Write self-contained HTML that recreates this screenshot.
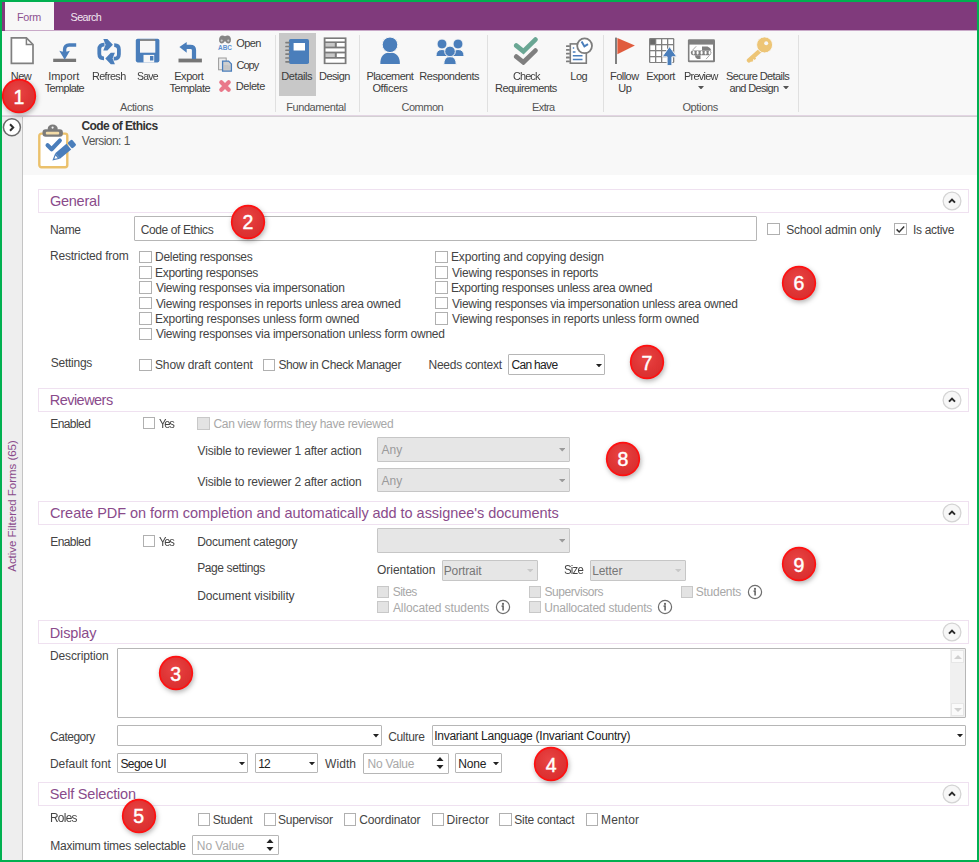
<!DOCTYPE html><html><head><meta charset="utf-8"><style>
html,body{margin:0;padding:0;width:979px;height:862px;overflow:hidden;background:#fff}
body{position:relative;font-family:"Liberation Sans",sans-serif}
.a{position:absolute;display:block}
.t{position:absolute;white-space:nowrap;line-height:1;transform-origin:0 0}
.badge{position:absolute}
.badge svg{position:absolute;left:0;top:0;filter:drop-shadow(1px 2.5px 2.5px rgba(0,0,0,0.3))}
.badge span{position:absolute;left:0;top:0;width:40px;height:40px;line-height:40px;text-align:center;color:#fff;font-size:19.5px;-webkit-text-stroke:0.45px #fff;padding-top:0.6px;box-sizing:border-box}
</style></head><body><div id="wrap" style="position:absolute;left:0;top:0;width:979px;height:862px;overflow:hidden;"><div class="a" style="left:0px;top:0px;width:979px;height:862px;background:#fff"></div><div class="a" style="left:2px;top:2px;width:975px;height:29px;background:#803a7c"></div><div class="a" style="left:5px;top:2px;width:49px;height:29px;background:#f7f7f7"></div><div class="a" style="left:5px;top:30px;width:972px;height:1px;background:#c9a9c8"></div><div class="a" style="left:2px;top:31px;width:975px;height:84px;background:#f8f8f8"></div><div class="a" style="left:2px;top:115px;width:975px;height:1px;background:#e3d5e3"></div><div class="a" style="left:2px;top:116px;width:975px;height:1px;background:#d3d0d3"></div><div class="a" style="left:274.5px;top:35px;width:1.0px;height:77px;background:#e0e0e0"></div><div class="a" style="left:358.5px;top:35px;width:1.0px;height:77px;background:#e0e0e0"></div><div class="a" style="left:487px;top:35px;width:1px;height:77px;background:#e0e0e0"></div><div class="a" style="left:602.5px;top:35px;width:1.0px;height:77px;background:#e0e0e0"></div><div class="a" style="left:798px;top:35px;width:1px;height:77px;background:#e0e0e0"></div><div class="a" style="left:279px;top:32.5px;width:37px;height:63.5px;background:#c8c8c8"></div><svg class="a" style="left:697.6px;top:85.75px" width="6" height="3.5" viewBox="0 0 6 3.5"><path d="M0 0H6L3.0 3.5Z" fill="#555"/></svg><svg class="a" style="left:782.5px;top:85.75px" width="6" height="3.5" viewBox="0 0 6 3.5"><path d="M0 0H6L3.0 3.5Z" fill="#555"/></svg><div class="a" style="left:2px;top:117px;width:20px;height:743px;background:#eeeeee"></div><div class="a" style="left:22px;top:117px;width:1px;height:743px;background:#c4c4c4"></div><div class="a" style="left:23px;top:117px;width:954px;height:57.5px;background:#f8f8f8"></div><div class="a" style="left:13.1px;top:506.2px;width:0;height:0"><div style="position:absolute;left:0;top:0;transform:translate(-50%,-50%) rotate(-90deg);white-space:nowrap;font-size:11.5px;letter-spacing:-0.03px;line-height:1;color:#8a4b8b">Active Filtered Forms (65)</div></div><div class="a" style="left:38px;top:189px;width:931px;height:24px;border:1px solid #efe1f0;box-sizing:border-box;background:#fff"></div><svg class="a" style="left:942.4px;top:190.89999999999998px" width="20" height="20" viewBox="0 0 20 20"><circle cx="10" cy="10" r="8.9" fill="#f7f7f7" stroke="#d4d4d4" stroke-width="1.3"/><path d="M7 11.6L10 8.6L13 11.6" fill="none" stroke="#2a2a2a" stroke-width="2"/></svg><div class="a" style="left:134.4px;top:216.3px;width:622.2px;height:25.19999999999999px;border:1px solid #b6b6b6;box-sizing:border-box;background:#fff;border-radius:1px"></div><div class="a" style="left:767.3px;top:222.5px;width:12.600000000000023px;height:12.599999999999994px;border:1px solid #b0b0b0;box-sizing:border-box;background:#fff"></div><div class="a" style="left:894px;top:222.5px;width:12.600000000000023px;height:12.599999999999994px;border:1px solid #b0b0b0;box-sizing:border-box;background:#fff"></div><svg class="a" style="left:894px;top:222.5px" width="12.6" height="12.6" viewBox="0 0 12.6 12.6"><path d="M2.6 6.4L5.2 9L10.2 3.6" fill="none" stroke="#333" stroke-width="1.5"/></svg><div class="a" style="left:139px;top:250.6px;width:12.599999999999994px;height:12.599999999999994px;border:1px solid #b0b0b0;box-sizing:border-box;background:#fff"></div><div class="a" style="left:139px;top:266.0px;width:12.599999999999994px;height:12.600000000000023px;border:1px solid #b0b0b0;box-sizing:border-box;background:#fff"></div><div class="a" style="left:139px;top:281.4px;width:12.599999999999994px;height:12.600000000000023px;border:1px solid #b0b0b0;box-sizing:border-box;background:#fff"></div><div class="a" style="left:139px;top:296.8px;width:12.599999999999994px;height:12.600000000000023px;border:1px solid #b0b0b0;box-sizing:border-box;background:#fff"></div><div class="a" style="left:139px;top:312.2px;width:12.599999999999994px;height:12.600000000000023px;border:1px solid #b0b0b0;box-sizing:border-box;background:#fff"></div><div class="a" style="left:139px;top:327.6px;width:12.599999999999994px;height:12.600000000000023px;border:1px solid #b0b0b0;box-sizing:border-box;background:#fff"></div><div class="a" style="left:435.1px;top:250.6px;width:12.600000000000023px;height:12.599999999999994px;border:1px solid #b0b0b0;box-sizing:border-box;background:#fff"></div><div class="a" style="left:435.1px;top:266.0px;width:12.600000000000023px;height:12.600000000000023px;border:1px solid #b0b0b0;box-sizing:border-box;background:#fff"></div><div class="a" style="left:435.1px;top:281.4px;width:12.600000000000023px;height:12.600000000000023px;border:1px solid #b0b0b0;box-sizing:border-box;background:#fff"></div><div class="a" style="left:435.1px;top:296.8px;width:12.600000000000023px;height:12.600000000000023px;border:1px solid #b0b0b0;box-sizing:border-box;background:#fff"></div><div class="a" style="left:435.1px;top:312.2px;width:12.600000000000023px;height:12.600000000000023px;border:1px solid #b0b0b0;box-sizing:border-box;background:#fff"></div><div class="a" style="left:139px;top:358.8px;width:12.599999999999994px;height:12.600000000000023px;border:1px solid #b0b0b0;box-sizing:border-box;background:#fff"></div><div class="a" style="left:262.8px;top:358.8px;width:12.600000000000023px;height:12.600000000000023px;border:1px solid #b0b0b0;box-sizing:border-box;background:#fff"></div><div class="a" style="left:508.4px;top:354.3px;width:96.70000000000005px;height:21.19999999999999px;border:1px solid #b6b6b6;box-sizing:border-box;background:#fff;border-radius:1px"></div><svg class="a" style="left:596.1px;top:363.5px" width="6.0" height="3.4" viewBox="0 0 6.0 3.4"><path d="M0 0H6.0L3.0 3.4Z" fill="#222"/></svg><div class="a" style="left:38px;top:388px;width:931px;height:24px;border:1px solid #efe1f0;box-sizing:border-box;background:#fff"></div><svg class="a" style="left:942.4px;top:389.7px" width="20" height="20" viewBox="0 0 20 20"><circle cx="10" cy="10" r="8.9" fill="#f7f7f7" stroke="#d4d4d4" stroke-width="1.3"/><path d="M7 11.6L10 8.6L13 11.6" fill="none" stroke="#2a2a2a" stroke-width="2"/></svg><div class="a" style="left:143.4px;top:417.4px;width:12.0px;height:12.0px;border:1px solid #b0b0b0;box-sizing:border-box;background:#fff"></div><div class="a" style="left:197.4px;top:417.4px;width:12.400000000000006px;height:12.399999999999977px;border:1px solid #c8c8c8;box-sizing:border-box;background:#e3e3e3"></div><div class="a" style="left:377.2px;top:437.3px;width:193.09999999999997px;height:24.5px;border:1px solid #c6c6c6;box-sizing:border-box;background:#e6e6e6;border-radius:1px"></div><svg class="a" style="left:558.9499999999999px;top:448.15000000000003px" width="6.5" height="3.4" viewBox="0 0 6.5 3.4"><path d="M0 0H6.5L3.25 3.4Z" fill="#9a9a9a"/></svg><div class="a" style="left:377.2px;top:468.4px;width:193.09999999999997px;height:24.0px;border:1px solid #c6c6c6;box-sizing:border-box;background:#e6e6e6;border-radius:1px"></div><svg class="a" style="left:558.9499999999999px;top:479.0px" width="6.5" height="3.4" viewBox="0 0 6.5 3.4"><path d="M0 0H6.5L3.25 3.4Z" fill="#9a9a9a"/></svg><div class="a" style="left:38px;top:501px;width:931px;height:24px;border:1px solid #efe1f0;box-sizing:border-box;background:#fff"></div><svg class="a" style="left:942.4px;top:502.8500000000001px" width="20" height="20" viewBox="0 0 20 20"><circle cx="10" cy="10" r="8.9" fill="#f7f7f7" stroke="#d4d4d4" stroke-width="1.3"/><path d="M7 11.6L10 8.6L13 11.6" fill="none" stroke="#2a2a2a" stroke-width="2"/></svg><div class="a" style="left:143.4px;top:535px;width:12.0px;height:12px;border:1px solid #b0b0b0;box-sizing:border-box;background:#fff"></div><div class="a" style="left:377.2px;top:528.4px;width:193.00000000000006px;height:24.5px;border:1px solid #c6c6c6;box-sizing:border-box;background:#e6e6e6;border-radius:1px"></div><svg class="a" style="left:558.85px;top:539.2499999999999px" width="6.5" height="3.4" viewBox="0 0 6.5 3.4"><path d="M0 0H6.5L3.25 3.4Z" fill="#9a9a9a"/></svg><div class="a" style="left:441.5px;top:560.2px;width:96.5px;height:20.59999999999991px;border:1px solid #c6c6c6;box-sizing:border-box;background:#e6e6e6;border-radius:1px"></div><svg class="a" style="left:526.65px;top:569.0999999999999px" width="6.5" height="3.4" viewBox="0 0 6.5 3.4"><path d="M0 0H6.5L3.25 3.4Z" fill="#c8c8c8"/></svg><div class="a" style="left:589.5px;top:560.2px;width:96.5px;height:20.59999999999991px;border:1px solid #c6c6c6;box-sizing:border-box;background:#e6e6e6;border-radius:1px"></div><svg class="a" style="left:674.65px;top:569.0999999999999px" width="6.5" height="3.4" viewBox="0 0 6.5 3.4"><path d="M0 0H6.5L3.25 3.4Z" fill="#c8c8c8"/></svg><div class="a" style="left:377.2px;top:586px;width:12.0px;height:12px;border:1px solid #c8c8c8;box-sizing:border-box;background:#e3e3e3"></div><div class="a" style="left:528.6px;top:586px;width:12.0px;height:12px;border:1px solid #c8c8c8;box-sizing:border-box;background:#e3e3e3"></div><div class="a" style="left:680.5px;top:586px;width:12.0px;height:12px;border:1px solid #c8c8c8;box-sizing:border-box;background:#e3e3e3"></div><svg class="a" style="left:747px;top:583.6px" width="16" height="16" viewBox="0 0 16 16"><circle cx="8" cy="8" r="6.6" fill="none" stroke="#6e6e6e" stroke-width="1.2"/><circle cx="8" cy="4.9" r="1.1" fill="#666"/><path d="M6.6 7.1H8.1V11.6" fill="none" stroke="#666" stroke-width="1.6"/></svg><div class="a" style="left:377.2px;top:601.4px;width:12.0px;height:12.0px;border:1px solid #c8c8c8;box-sizing:border-box;background:#e3e3e3"></div><svg class="a" style="left:495.1px;top:598.8px" width="16" height="16" viewBox="0 0 16 16"><circle cx="8" cy="8" r="6.6" fill="none" stroke="#6e6e6e" stroke-width="1.2"/><circle cx="8" cy="4.9" r="1.1" fill="#666"/><path d="M6.6 7.1H8.1V11.6" fill="none" stroke="#666" stroke-width="1.6"/></svg><div class="a" style="left:528.6px;top:601.4px;width:12.0px;height:12.0px;border:1px solid #c8c8c8;box-sizing:border-box;background:#e3e3e3"></div><svg class="a" style="left:657.4px;top:598.8px" width="16" height="16" viewBox="0 0 16 16"><circle cx="8" cy="8" r="6.6" fill="none" stroke="#6e6e6e" stroke-width="1.2"/><circle cx="8" cy="4.9" r="1.1" fill="#666"/><path d="M6.6 7.1H8.1V11.6" fill="none" stroke="#666" stroke-width="1.6"/></svg><div class="a" style="left:38px;top:620px;width:931px;height:24px;border:1px solid #efe1f0;box-sizing:border-box;background:#fff"></div><svg class="a" style="left:942.4px;top:622.0500000000002px" width="20" height="20" viewBox="0 0 20 20"><circle cx="10" cy="10" r="8.9" fill="#f7f7f7" stroke="#d4d4d4" stroke-width="1.3"/><path d="M7 11.6L10 8.6L13 11.6" fill="none" stroke="#2a2a2a" stroke-width="2"/></svg><div class="a" style="left:117px;top:647.8px;width:848.7px;height:70.60000000000002px;border:1px solid #b6b6b6;box-sizing:border-box;background:#fff;border-radius:1px"></div><div class="a" style="left:949.6px;top:648.8px;width:15.100000000000023px;height:68.60000000000002px;background:#f0f0f0"></div><div class="a" style="left:950.5px;top:649.6px;width:13.5px;height:13.899999999999977px;background:#fafafa;border:1px solid #e6e6e6;box-sizing:border-box"></div><div class="a" style="left:950.5px;top:702.6px;width:13.5px;height:13.899999999999977px;background:#fafafa;border:1px solid #e6e6e6;box-sizing:border-box"></div><svg class="a" style="left:953.5px;top:654.5px" width="8" height="4" viewBox="0 0 8 4"><path d="M0 4L4 0L8 4Z" fill="#d0d0d0"/></svg><svg class="a" style="left:953.5px;top:707.5px" width="8" height="4" viewBox="0 0 8 4"><path d="M0 0L4 4L8 0Z" fill="#d0d0d0"/></svg><div class="a" style="left:117px;top:724.9px;width:264.5px;height:21.300000000000068px;border:1px solid #b6b6b6;box-sizing:border-box;background:#fff;border-radius:1px"></div><svg class="a" style="left:372.5px;top:734.1499999999999px" width="6.0" height="3.4" viewBox="0 0 6.0 3.4"><path d="M0 0H6.0L3.0 3.4Z" fill="#222"/></svg><div class="a" style="left:431.7px;top:724.7px;width:534.0px;height:21.399999999999977px;border:1px solid #b6b6b6;box-sizing:border-box;background:#fff;border-radius:1px"></div><svg class="a" style="left:956.7px;top:734.0px" width="6.0" height="3.4" viewBox="0 0 6.0 3.4"><path d="M0 0H6.0L3.0 3.4Z" fill="#222"/></svg><div class="a" style="left:117px;top:752.6px;width:130.8px;height:20.799999999999955px;border:1px solid #b6b6b6;box-sizing:border-box;background:#fff;border-radius:1px"></div><svg class="a" style="left:238.8px;top:761.5999999999999px" width="6.0" height="3.4" viewBox="0 0 6.0 3.4"><path d="M0 0H6.0L3.0 3.4Z" fill="#222"/></svg><div class="a" style="left:255.1px;top:752.6px;width:62.50000000000003px;height:20.799999999999955px;border:1px solid #b6b6b6;box-sizing:border-box;background:#fff;border-radius:1px"></div><svg class="a" style="left:308.6px;top:761.5999999999999px" width="6.0" height="3.4" viewBox="0 0 6.0 3.4"><path d="M0 0H6.0L3.0 3.4Z" fill="#222"/></svg><div class="a" style="left:362.6px;top:752.8px;width:86.39999999999998px;height:20.800000000000068px;border:1px solid #b6b6b6;box-sizing:border-box;background:#fff;border-radius:1px"></div><svg class="a" style="left:436px;top:756px" width="8" height="14" viewBox="0 0 8 14"><path d="M0.5 5L4 1L7.5 5Z M0.5 9L4 13L7.5 9Z" fill="#222"/></svg><div class="a" style="left:455.3px;top:752.6px;width:46.69999999999999px;height:20.799999999999955px;border:1px solid #b6b6b6;box-sizing:border-box;background:#fff;border-radius:1px"></div><svg class="a" style="left:493.0px;top:761.5999999999999px" width="6.0" height="3.4" viewBox="0 0 6.0 3.4"><path d="M0 0H6.0L3.0 3.4Z" fill="#222"/></svg><div class="a" style="left:38px;top:782px;width:931px;height:24px;border:1px solid #efe1f0;box-sizing:border-box;background:#fff"></div><svg class="a" style="left:942.4px;top:783.9000000000001px" width="20" height="20" viewBox="0 0 20 20"><circle cx="10" cy="10" r="8.9" fill="#f7f7f7" stroke="#d4d4d4" stroke-width="1.3"/><path d="M7 11.6L10 8.6L13 11.6" fill="none" stroke="#2a2a2a" stroke-width="2"/></svg><div class="a" style="left:197.6px;top:813.2px;width:12.400000000000006px;height:12.399999999999977px;border:1px solid #b0b0b0;box-sizing:border-box;background:#fff"></div><div class="a" style="left:263.5px;top:813.2px;width:12.399999999999977px;height:12.399999999999977px;border:1px solid #b0b0b0;box-sizing:border-box;background:#fff"></div><div class="a" style="left:344px;top:813.2px;width:12.399999999999977px;height:12.399999999999977px;border:1px solid #b0b0b0;box-sizing:border-box;background:#fff"></div><div class="a" style="left:431.8px;top:813.2px;width:12.399999999999977px;height:12.399999999999977px;border:1px solid #b0b0b0;box-sizing:border-box;background:#fff"></div><div class="a" style="left:499.2px;top:813.2px;width:12.399999999999977px;height:12.399999999999977px;border:1px solid #b0b0b0;box-sizing:border-box;background:#fff"></div><div class="a" style="left:585.8px;top:813.2px;width:12.399999999999977px;height:12.399999999999977px;border:1px solid #b0b0b0;box-sizing:border-box;background:#fff"></div><div class="a" style="left:192.4px;top:834.8px;width:86.6px;height:19.90000000000009px;border:1px solid #b6b6b6;box-sizing:border-box;background:#fff;border-radius:1px"></div><svg class="a" style="left:266.4px;top:838px" width="8" height="14" viewBox="0 0 8 14"><path d="M0.5 5L4 1L7.5 5Z M0.5 9L4 13L7.5 9Z" fill="#222"/></svg><svg class="a" style="left:10px;top:36px" width="25" height="29" viewBox="0 0 25 29"><path d="M1.4 1.9H16.4L23 8.5V27.3H1.4Z" fill="#fff" stroke="#808080" stroke-width="1.7"/><path d="M16.4 1.9V8.5H23" fill="none" stroke="#808080" stroke-width="1.5"/></svg><svg class="a" style="left:52px;top:42px" width="26" height="22" viewBox="0 0 26 22"><rect x="1.2" y="16.7" width="22.9" height="3.3" fill="#767676"/><path d="M24.2 3H17.2Q12.6 3 12.6 7.6V10.5" fill="none" stroke="#4a7ebb" stroke-width="3.4"/><path d="M7.3 8.8Q12.6 10.6 17.9 8.8L12.7 17.8Z" fill="#4a7ebb"/></svg><svg class="a" style="left:96px;top:38px" width="26" height="28" viewBox="0 0 26 28"><path d="M8.5 6.7H7.8Q3.3 6.7 3.3 11.2V15.8Q3.3 20.3 7.8 20.3H8" fill="none" stroke="#4a7ebb" stroke-width="3.8"/><path d="M7.3 1.1H11.4L16.9 6.85L11.4 12.6H7.3L9.6 6.85Z" fill="#4a7ebb"/><g transform="rotate(180 13.1 13.7)"><path d="M8.5 6.7H7.8Q3.3 6.7 3.3 11.2V15.8Q3.3 20.3 7.8 20.3H8" fill="none" stroke="#4a7ebb" stroke-width="3.8"/><path d="M7.3 1.1H11.4L16.9 6.85L11.4 12.6H7.3L9.6 6.85Z" fill="#4a7ebb"/></g></svg><svg class="a" style="left:135px;top:38px" width="25" height="25" viewBox="0 0 25 25"><rect x="0.8" y="0.8" width="23.6" height="23.6" rx="1.8" fill="#4a7ebb"/><rect x="5" y="1.2" width="15" height="2" fill="#888"/><rect x="5" y="3" width="15.3" height="11.7" fill="#f7f7f7"/><rect x="8.5" y="16.9" width="10.7" height="7.6" fill="#f7f7f7"/><rect x="15" y="18" width="3.4" height="4.5" fill="#4a7ebb"/></svg><svg class="a" style="left:178px;top:41px" width="25" height="22" viewBox="0 0 25 22"><rect x="0.5" y="17.6" width="23.4" height="3.8" fill="#767676"/><path d="M16 18V9Q16 5.8 12.5 5.8H6" fill="none" stroke="#4a7ebb" stroke-width="4.2"/><path d="M1.4 6L8.7 1V11.7Z" fill="#4a7ebb"/></svg><svg class="a" style="left:217px;top:34px" width="16" height="17" viewBox="0 0 16 17"><path d="M2.2 7.5Q1.5 3.5 4 1.8Q6 0.8 8 2.2Q10 0.8 12 1.8Q14.5 3.5 13.8 7.5Q13 9.5 11.3 9.5Q9.3 9.5 8.6 7.5H7.4Q6.7 9.5 4.7 9.5Q3 9.5 2.2 7.5Z" fill="#858585"/><circle cx="4.7" cy="6.6" r="1.1" fill="#c8c8c8"/><circle cx="11.3" cy="6.6" r="1.1" fill="#c8c8c8"/><text x="8" y="15.8" font-size="6.6" font-weight="bold" text-anchor="middle" textLength="14" lengthAdjust="spacingAndGlyphs" fill="#5d90d0" font-family="Liberation Sans">ABC</text></svg><svg class="a" style="left:217px;top:57px" width="16" height="15" viewBox="0 0 16 15"><rect x="1.6" y="1" width="7.6" height="11.8" fill="#ececec" stroke="#9a9a9a" stroke-width="1"/><path d="M5.6 4.1H11.6L14.4 6.9V14.1H5.6Z" fill="#cfcfcf" stroke="#4a7ebb" stroke-width="1.3"/><path d="M8 8V12.6M10 8V12.6M12 8.5V12.6" stroke="#b8b8b8" stroke-width="0.8"/></svg><svg class="a" style="left:218px;top:79px" width="14" height="14" viewBox="0 0 14 14"><path d="M3.3 3.3L10.7 10.7M10.7 3.3L3.3 10.7" stroke="#e9788a" stroke-width="4.2" stroke-linecap="round"/></svg><svg class="a" style="left:285px;top:39px" width="25" height="26" viewBox="0 0 25 26"><rect x="3.9" y="0.1" width="20.1" height="25" rx="1.8" fill="#4a7ebb"/><rect x="8.6" y="4" width="11.4" height="7.5" fill="#fff"/><rect x="0.2" y="2.80" width="4.6" height="1.6" rx="0.6" fill="#7d7d7d"/><rect x="0.2" y="6.65" width="4.6" height="1.6" rx="0.6" fill="#7d7d7d"/><rect x="0.2" y="10.50" width="4.6" height="1.6" rx="0.6" fill="#7d7d7d"/><rect x="0.2" y="14.35" width="4.6" height="1.6" rx="0.6" fill="#7d7d7d"/><rect x="0.2" y="18.20" width="4.6" height="1.6" rx="0.6" fill="#7d7d7d"/><rect x="0.2" y="22.05" width="4.6" height="1.6" rx="0.6" fill="#7d7d7d"/></svg><svg class="a" style="left:323px;top:37px" width="24" height="28" viewBox="0 0 24 28"><rect x="0.7" y="0.4" width="22.8" height="26.7" fill="#7a7a7a"/><rect x="2.5" y="2" width="19.2" height="2.4" fill="#fff"/><rect x="2.5" y="6" width="9.3" height="3.6" fill="#c8c8c8"/><rect x="13.8" y="6" width="7.9" height="3.6" fill="#fff"/><rect x="2.5" y="11.4" width="19.2" height="3.2" fill="#fff"/><rect x="2.5" y="16.4" width="9.3" height="3.6" fill="#c8c8c8"/><rect x="13.8" y="16.4" width="7.9" height="3.6" fill="#fff"/><rect x="2.5" y="21.7" width="19.2" height="4" fill="#fff"/></svg><svg class="a" style="left:379px;top:36px" width="23" height="29" viewBox="0 0 23 29"><path d="M1.3 28.1C1.3 20.5 4.5 16.6 11 16.6C17.5 16.6 20.9 20.5 20.9 28.1Z" fill="#4a7ebb"/><circle cx="11" cy="8.8" r="7.8" fill="#4a7ebb" stroke="#f7f7f7" stroke-width="1"/></svg><svg class="a" style="left:435px;top:38px" width="30" height="28" viewBox="0 0 30 28"><path d="M0.9000000000000004 18.5Q0.9000000000000004 11.5 7 11.5Q13.1 11.5 13.1 18.5Z" fill="#4a7ebb" stroke="#f7f7f7" stroke-width="1"/><circle cx="7" cy="6" r="5" fill="#4a7ebb" stroke="#f7f7f7" stroke-width="1"/><path d="M16.9 18.5Q16.9 11.5 23 11.5Q29.1 11.5 29.1 18.5Z" fill="#4a7ebb" stroke="#f7f7f7" stroke-width="1"/><circle cx="23" cy="6" r="5" fill="#4a7ebb" stroke="#f7f7f7" stroke-width="1"/><path d="M8.75 26.6Q8.75 18.6 15 18.6Q21.25 18.6 21.25 26.6Z" fill="#4a7ebb" stroke="#f7f7f7" stroke-width="1"/><circle cx="15" cy="13.4" r="5.3" fill="#4a7ebb" stroke="#f7f7f7" stroke-width="1"/></svg><svg class="a" style="left:513px;top:36px" width="26" height="29" viewBox="0 0 26 29"><path d="M3.3 20.6L10.4 26.3L22.4 14.6" fill="none" stroke="#7f7f7f" stroke-width="4.7" stroke-linecap="round"/><path d="M3.3 9.6L10.4 15.4L22.4 3.6" fill="none" stroke="#6aa794" stroke-width="4.7" stroke-linecap="round"/></svg><svg class="a" style="left:565px;top:36px" width="29" height="29" viewBox="0 0 29 29"><rect x="5.3" y="7.9" width="16" height="19.3" fill="#fff" stroke="#7d7d7d" stroke-width="1.6"/><path d="M7.8 12.1H9.2M7.8 15.9H10.5M7.8 19.7H17.5M7.8 23.5H17.5" stroke="#4a7ebb" stroke-width="1.5"/><rect x="1" y="9.2" width="3.9" height="1.8" rx="0.5" fill="#7d7d7d"/><rect x="1" y="13.0" width="3.9" height="1.8" rx="0.5" fill="#7d7d7d"/><rect x="1" y="16.8" width="3.9" height="1.8" rx="0.5" fill="#7d7d7d"/><rect x="1" y="20.6" width="3.9" height="1.8" rx="0.5" fill="#7d7d7d"/><rect x="1" y="24.4" width="3.9" height="1.8" rx="0.5" fill="#7d7d7d"/><circle cx="19.6" cy="9.8" r="7.4" fill="#fff" stroke="#7d7d7d" stroke-width="1.8"/><path d="M16.6 5.6L19.4 10.4L23 8.1" fill="none" stroke="#4a7ebb" stroke-width="2"/></svg><svg class="a" style="left:614px;top:37px" width="22" height="28" viewBox="0 0 22 28"><rect x="1" y="0.6" width="2" height="26.4" fill="#808080"/><path d="M3.4 0.9L20.9 8.6L3.4 17.2Z" fill="#e05c3e"/></svg><svg class="a" style="left:648px;top:37px" width="30" height="29" viewBox="0 0 30 29"><rect x="1" y="1" width="25.3" height="25" rx="1.2" fill="#808080"/><rect x="2.3" y="2.3" width="4.7" height="4.7" fill="#6a6a6a"/><rect x="8.3" y="2.3" width="4.7" height="4.7" fill="#fff"/><rect x="14.3" y="2.3" width="4.7" height="4.7" fill="#fff"/><rect x="20.3" y="2.3" width="4.7" height="4.7" fill="#fff"/><rect x="2.3" y="8.3" width="4.7" height="4.7" fill="#fff"/><rect x="8.3" y="8.3" width="4.7" height="4.7" fill="#fff"/><rect x="14.3" y="8.3" width="4.7" height="4.7" fill="#fff"/><rect x="20.3" y="8.3" width="4.7" height="4.7" fill="#fff"/><rect x="2.3" y="14.3" width="4.7" height="4.7" fill="#fff"/><rect x="8.3" y="14.3" width="4.7" height="4.7" fill="#fff"/><rect x="14.3" y="14.3" width="4.7" height="4.7" fill="#fff"/><rect x="20.3" y="14.3" width="4.7" height="4.7" fill="#fff"/><rect x="2.3" y="20.3" width="4.7" height="4.7" fill="#fff"/><rect x="8.3" y="20.3" width="4.7" height="4.7" fill="#fff"/><rect x="14.3" y="20.3" width="4.7" height="4.7" fill="#fff"/><rect x="20.3" y="20.3" width="4.7" height="4.7" fill="#fff"/><path d="M21.5 9.6L28.8 19.8H23.9V28.6H19.1V19.8H14.2Z" fill="#4a7ebb" stroke="#f7f7f7" stroke-width="1"/></svg><svg class="a" style="left:687px;top:39px" width="29" height="24" viewBox="0 0 29 24"><rect x="0.9" y="0.3" width="27.1" height="22.9" rx="1.3" fill="#808080"/><rect x="2.5" y="5.6" width="23.5" height="15.8" fill="#fff"/><path d="M3.8 13.8Q3.8 11.4 6 11.4H22.2Q24.4 11.4 24.4 13.8Q24.4 16.2 22.2 16.2H6Q3.8 16.2 3.8 13.8Z" fill="#808080"/><rect x="5.6" y="12.1" width="2" height="3.3" rx="0.8" fill="#fff"/><rect x="9.6" y="12.1" width="2" height="3.3" rx="0.8" fill="#fff"/><rect x="13.6" y="12.1" width="2" height="3.3" rx="0.8" fill="#fff"/><rect x="17.6" y="12.1" width="2" height="3.3" rx="0.8" fill="#fff"/><rect x="21.6" y="12.1" width="2" height="3.3" rx="0.8" fill="#fff"/><path d="M15 7.6H20.5Q23.5 8.5 24.4 11.4H15Z" fill="#808080"/><path d="M7.7 16.2H13.5V20.1H10.5Q8.3 19 7.7 16.2Z" fill="#808080"/><path d="M5.5 11.2L9.2 7.3M19 20.1L22.7 16.2" stroke="#a8a8a8" stroke-width="1"/></svg><svg class="a" style="left:745px;top:35px" width="30" height="28" viewBox="0 0 30 28"><path d="M15.6 15.2L4 25.4" stroke="#edc576" stroke-width="4.4" stroke-linecap="round"/><path d="M8.6 22.5L10.4 24.3M6 24.8L7.6 26.4" stroke="#edc576" stroke-width="2"/><circle cx="19.6" cy="9.9" r="8" fill="#edc576" stroke="#f7f7f7" stroke-width="0.9"/><circle cx="21.2" cy="8.2" r="2" fill="#f7f7f7"/></svg><svg class="a" style="left:36px;top:122px" width="40" height="48" viewBox="0 0 40 48"><rect x="3.3" y="11.6" width="28" height="33.6" rx="2.2" fill="#fff" stroke="#ebc16c" stroke-width="2.4"/><rect x="6.5" y="7.2" width="20.4" height="7.6" rx="3.2" fill="#7b7b7b"/><ellipse cx="16.7" cy="6.8" rx="5" ry="4.2" fill="#7b7b7b"/><circle cx="16.6" cy="5.6" r="1.1" fill="#f4f4f4"/><rect x="9.8" y="9.8" width="13.4" height="2.6" rx="1" fill="#f3dca8"/><path d="M11.6 23.3L15.6 27.2L23.8 18.6" fill="none" stroke="#4a7ebb" stroke-width="4.2" stroke-linejoin="round" stroke-linecap="round"/><g transform="translate(16.4 38.4) rotate(-40)"><path d="M0 0L6.8 -3.7V3.7Z" fill="#4a7ebb"/><path d="M2.6 0L5.6 -1.8V1.8Z" fill="#fff"/><rect x="6.8" y="-3.7" width="14.6" height="7.4" fill="#4a7ebb"/><rect x="22.6" y="-3.7" width="5.8" height="7.4" rx="1.6" fill="#4a7ebb"/></g></svg><svg class="a" style="left:2px;top:117px" width="20" height="21" viewBox="0 0 20 21"><circle cx="9.9" cy="10.3" r="8.5" fill="#fff" stroke="#6a6a6a" stroke-width="1.5"/><path d="M8 7.3L11.2 10.5L8 13.7" fill="none" stroke="#2e2e2e" stroke-width="2"/></svg><div class="t" style="left:17.04px;top:11.55px;font-size:10.80px;letter-spacing:-0.333px;color:#8d5290;font-weight:normal">Form</div><div class="t" style="left:70.57px;top:11.55px;font-size:10.80px;letter-spacing:-0.597px;color:#f0e6f0;font-weight:normal">Search</div><div class="t" style="left:10.81px;top:70.65px;font-size:11.00px;letter-spacing:-0.613px;color:#3c3c3c;font-weight:normal">New</div><div class="t" style="left:48.23px;top:70.65px;font-size:11.00px;letter-spacing:-0.036px;color:#3c3c3c;font-weight:normal">Import</div><div class="t" style="left:44.69px;top:82.54px;font-size:11.00px;letter-spacing:-0.665px;color:#3c3c3c;font-weight:normal">Template</div><div class="t" style="left:91.81px;top:70.65px;font-size:11.00px;letter-spacing:-0.640px;color:#3c3c3c;font-weight:normal;transform:scaleX(0.9862)">Refresh</div><div class="t" style="left:136.82px;top:70.65px;font-size:11.00px;letter-spacing:-0.816px;color:#3c3c3c;font-weight:normal;transform:scaleX(0.9511)">Save</div><div class="t" style="left:174.23px;top:70.65px;font-size:11.00px;letter-spacing:-0.441px;color:#3c3c3c;font-weight:normal">Export</div><div class="t" style="left:169.52px;top:82.54px;font-size:11.00px;letter-spacing:-0.499px;color:#3c3c3c;font-weight:normal">Template</div><div class="t" style="left:236.31px;top:38.34px;font-size:11.00px;letter-spacing:-0.629px;color:#3c3c3c;font-weight:normal">Open</div><div class="t" style="left:236.47px;top:60.04px;font-size:11.00px;letter-spacing:-0.982px;color:#3c3c3c;font-weight:normal">Copy</div><div class="t" style="left:235.81px;top:80.84px;font-size:11.00px;letter-spacing:-0.454px;color:#3c3c3c;font-weight:normal">Delete</div><div class="t" style="left:119.99px;top:102.25px;font-size:11.00px;letter-spacing:-0.419px;color:#555;font-weight:normal">Actions</div><div class="t" style="left:281.23px;top:70.65px;font-size:11.00px;letter-spacing:-0.370px;color:#3c3c3c;font-weight:normal">Details</div><div class="t" style="left:319.09px;top:70.65px;font-size:11.00px;letter-spacing:-0.600px;color:#3c3c3c;font-weight:normal">Design</div><div class="t" style="left:286.23px;top:102.25px;font-size:11.00px;letter-spacing:-0.425px;color:#555;font-weight:normal">Fundamental</div><div class="t" style="left:366.51px;top:70.65px;font-size:11.00px;letter-spacing:-0.583px;color:#3c3c3c;font-weight:normal">Placement</div><div class="t" style="left:372.40px;top:82.54px;font-size:11.00px;letter-spacing:-0.332px;color:#3c3c3c;font-weight:normal">Officers</div><div class="t" style="left:419.23px;top:70.65px;font-size:11.00px;letter-spacing:-0.443px;color:#3c3c3c;font-weight:normal">Respondents</div><div class="t" style="left:401.49px;top:102.25px;font-size:11.00px;letter-spacing:-0.486px;color:#555;font-weight:normal">Common</div><div class="t" style="left:512.71px;top:70.65px;font-size:11.00px;letter-spacing:-0.910px;color:#3c3c3c;font-weight:normal;transform:scaleX(0.9940)">Check</div><div class="t" style="left:495.01px;top:82.54px;font-size:11.00px;letter-spacing:-0.562px;color:#3c3c3c;font-weight:normal">Requirements</div><div class="t" style="left:570.30px;top:70.65px;font-size:11.00px;letter-spacing:-0.463px;color:#3c3c3c;font-weight:normal">Log</div><div class="t" style="left:532.11px;top:102.25px;font-size:11.00px;letter-spacing:-0.659px;color:#555;font-weight:normal">Extra</div><div class="t" style="left:610.03px;top:70.65px;font-size:11.00px;letter-spacing:-0.542px;color:#3c3c3c;font-weight:normal">Follow</div><div class="t" style="left:618.17px;top:82.54px;font-size:11.00px;letter-spacing:-0.457px;color:#3c3c3c;font-weight:normal">Up</div><div class="t" style="left:646.23px;top:70.65px;font-size:11.00px;letter-spacing:-0.531px;color:#3c3c3c;font-weight:normal">Export</div><div class="t" style="left:683.77px;top:70.65px;font-size:11.00px;letter-spacing:-0.744px;color:#3c3c3c;font-weight:normal;transform:scaleX(0.9941)">Preview</div><div class="t" style="left:726.08px;top:70.65px;font-size:11.00px;letter-spacing:-0.603px;color:#3c3c3c;font-weight:normal">Secure Details</div><div class="t" style="left:729.46px;top:82.54px;font-size:11.00px;letter-spacing:-0.663px;color:#3c3c3c;font-weight:normal">and Design</div><div class="t" style="left:682.39px;top:102.25px;font-size:11.00px;letter-spacing:-0.340px;color:#555;font-weight:normal">Options</div><div class="t" style="left:81.44px;top:119.74px;font-size:12.00px;letter-spacing:-0.564px;color:#333;font-weight:bold">Code of Ethics</div><div class="t" style="left:81.87px;top:134.64px;font-size:12.00px;letter-spacing:-0.542px;color:#555;font-weight:normal">Version: 1</div><div class="t" style="left:49.92px;top:194.38px;font-size:14.50px;letter-spacing:-0.231px;color:#8a4b8b;font-weight:normal">General</div><div class="t" style="left:49.96px;top:223.84px;font-size:12.00px;letter-spacing:-0.306px;color:#444;font-weight:normal">Name</div><div class="t" style="left:140.67px;top:223.84px;font-size:12.00px;letter-spacing:-0.387px;color:#444;font-weight:normal">Code of Ethics</div><div class="t" style="left:786.20px;top:223.94px;font-size:12.00px;letter-spacing:-0.210px;color:#444;font-weight:normal">School admin only</div><div class="t" style="left:912.98px;top:223.94px;font-size:12.00px;letter-spacing:-0.329px;color:#444;font-weight:normal">Is active</div><div class="t" style="left:49.96px;top:249.94px;font-size:12.00px;letter-spacing:-0.190px;color:#444;font-weight:normal">Restricted from</div><div class="t" style="left:155.09px;top:251.34px;font-size:12.00px;letter-spacing:-0.298px;color:#444;font-weight:normal">Deleting responses</div><div class="t" style="left:155.09px;top:266.74px;font-size:12.00px;letter-spacing:-0.342px;color:#444;font-weight:normal">Exporting responses</div><div class="t" style="left:155.88px;top:282.14px;font-size:12.00px;letter-spacing:-0.259px;color:#444;font-weight:normal">Viewing responses via impersonation</div><div class="t" style="left:155.88px;top:297.54px;font-size:12.00px;letter-spacing:-0.289px;color:#444;font-weight:normal">Viewing responses in reports unless area owned</div><div class="t" style="left:155.09px;top:312.94px;font-size:12.00px;letter-spacing:-0.250px;color:#444;font-weight:normal">Exporting responses unless form owned</div><div class="t" style="left:155.88px;top:328.34px;font-size:12.00px;letter-spacing:-0.248px;color:#444;font-weight:normal">Viewing responses via impersonation unless form owned</div><div class="t" style="left:450.96px;top:251.34px;font-size:12.00px;letter-spacing:-0.165px;color:#444;font-weight:normal">Exporting and copying design</div><div class="t" style="left:452.10px;top:266.74px;font-size:12.00px;letter-spacing:-0.281px;color:#444;font-weight:normal">Viewing responses in reports</div><div class="t" style="left:450.96px;top:282.14px;font-size:12.00px;letter-spacing:-0.333px;color:#444;font-weight:normal">Exporting responses unless area owned</div><div class="t" style="left:452.10px;top:297.54px;font-size:12.00px;letter-spacing:-0.311px;color:#444;font-weight:normal">Viewing responses via impersonation unless area owned</div><div class="t" style="left:452.10px;top:312.94px;font-size:12.00px;letter-spacing:-0.242px;color:#444;font-weight:normal">Viewing responses in reports unless form owned</div><div class="t" style="left:50.72px;top:357.44px;font-size:12.00px;letter-spacing:-0.246px;color:#444;font-weight:normal">Settings</div><div class="t" style="left:155.01px;top:359.44px;font-size:12.00px;letter-spacing:-0.136px;color:#444;font-weight:normal">Show draft content</div><div class="t" style="left:278.44px;top:359.44px;font-size:12.00px;letter-spacing:-0.389px;color:#444;font-weight:normal">Show in Check Manager</div><div class="t" style="left:428.57px;top:359.44px;font-size:12.00px;letter-spacing:-0.271px;color:#444;font-weight:normal">Needs context</div><div class="t" style="left:511.38px;top:359.34px;font-size:12.00px;letter-spacing:-0.666px;color:#222;font-weight:normal">Can have</div><div class="t" style="left:49.77px;top:393.18px;font-size:14.50px;letter-spacing:-0.539px;color:#8a4b8b;font-weight:normal">Reviewers</div><div class="t" style="left:50.25px;top:418.14px;font-size:12.00px;letter-spacing:-0.581px;color:#444;font-weight:normal">Enabled</div><div class="t" style="left:159.36px;top:418.14px;font-size:12.00px;letter-spacing:-1.244px;color:#444;font-weight:normal;transform:scaleX(0.9305)">Yes</div><div class="t" style="left:213.41px;top:418.14px;font-size:12.00px;letter-spacing:-0.286px;color:#a8a8a8;font-weight:normal">Can view forms they have reviewed</div><div class="t" style="left:197.57px;top:445.14px;font-size:12.00px;letter-spacing:-0.175px;color:#444;font-weight:normal">Visible to reviewer 1 after action</div><div class="t" style="left:381.48px;top:443.99px;font-size:12.00px;letter-spacing:0.008px;color:#9a9a9a;font-weight:normal">Any</div><div class="t" style="left:197.57px;top:475.74px;font-size:12.00px;letter-spacing:-0.175px;color:#444;font-weight:normal">Visible to reviewer 2 after action</div><div class="t" style="left:381.48px;top:474.84px;font-size:12.00px;letter-spacing:0.008px;color:#9a9a9a;font-weight:normal">Any</div><div class="t" style="left:49.92px;top:506.33px;font-size:14.50px;letter-spacing:-0.044px;color:#8a4b8b;font-weight:normal">Create PDF on form completion and automatically add to assignee&#x27;s documents</div><div class="t" style="left:50.25px;top:535.94px;font-size:12.00px;letter-spacing:-0.581px;color:#444;font-weight:normal">Enabled</div><div class="t" style="left:159.36px;top:535.94px;font-size:12.00px;letter-spacing:-1.244px;color:#444;font-weight:normal;transform:scaleX(0.9305)">Yes</div><div class="t" style="left:197.13px;top:536.24px;font-size:12.00px;letter-spacing:-0.222px;color:#444;font-weight:normal">Document category</div><div class="t" style="left:197.13px;top:562.44px;font-size:12.00px;letter-spacing:-0.373px;color:#444;font-weight:normal">Page settings</div><div class="t" style="left:377.05px;top:564.44px;font-size:12.00px;letter-spacing:-0.039px;color:#444;font-weight:normal">Orientation</div><div class="t" style="left:443.76px;top:564.94px;font-size:12.00px;letter-spacing:-0.133px;color:#777;font-weight:normal">Portrait</div><div class="t" style="left:563.64px;top:564.44px;font-size:12.00px;letter-spacing:-0.853px;color:#444;font-weight:normal;transform:scaleX(0.9483)">Size</div><div class="t" style="left:592.16px;top:564.94px;font-size:12.00px;letter-spacing:-0.078px;color:#777;font-weight:normal">Letter</div><div class="t" style="left:197.13px;top:590.34px;font-size:12.00px;letter-spacing:-0.104px;color:#444;font-weight:normal">Document visibility</div><div class="t" style="left:392.72px;top:586.44px;font-size:12.00px;letter-spacing:-0.511px;color:#a8a8a8;font-weight:normal">Sites</div><div class="t" style="left:544.41px;top:586.44px;font-size:12.00px;letter-spacing:-0.421px;color:#a8a8a8;font-weight:normal">Supervisors</div><div class="t" style="left:695.75px;top:586.44px;font-size:12.00px;letter-spacing:-0.252px;color:#a8a8a8;font-weight:normal">Students</div><div class="t" style="left:392.94px;top:601.84px;font-size:12.00px;letter-spacing:-0.103px;color:#a8a8a8;font-weight:normal">Allocated students</div><div class="t" style="left:544.36px;top:601.84px;font-size:12.00px;letter-spacing:-0.220px;color:#a8a8a8;font-weight:normal">Unallocated students</div><div class="t" style="left:49.77px;top:625.53px;font-size:14.50px;letter-spacing:-0.132px;color:#8a4b8b;font-weight:normal">Display</div><div class="t" style="left:49.96px;top:650.44px;font-size:12.00px;letter-spacing:-0.124px;color:#444;font-weight:normal">Description</div><div class="t" style="left:50.08px;top:731.44px;font-size:12.00px;letter-spacing:-0.506px;color:#444;font-weight:normal">Category</div><div class="t" style="left:388.22px;top:731.44px;font-size:12.00px;letter-spacing:-0.343px;color:#444;font-weight:normal">Culture</div><div class="t" style="left:434.13px;top:730.34px;font-size:12.00px;letter-spacing:-0.243px;color:#222;font-weight:normal">Invariant Language (Invariant Country)</div><div class="t" style="left:49.96px;top:757.94px;font-size:12.00px;letter-spacing:-0.037px;color:#444;font-weight:normal">Default font</div><div class="t" style="left:120.39px;top:758.24px;font-size:12.00px;letter-spacing:-0.559px;color:#222;font-weight:normal">Segoe UI</div><div class="t" style="left:258.29px;top:758.24px;font-size:12.00px;letter-spacing:-1.017px;color:#222;font-weight:normal">12</div><div class="t" style="left:325.00px;top:758.44px;font-size:12.00px;letter-spacing:0.093px;color:#444;font-weight:normal">Width</div><div class="t" style="left:367.51px;top:758.44px;font-size:12.00px;letter-spacing:-0.217px;color:#a8a8a8;font-weight:normal">No Value</div><div class="t" style="left:458.26px;top:758.24px;font-size:12.00px;letter-spacing:-0.138px;color:#222;font-weight:normal">None</div><div class="t" style="left:49.77px;top:787.38px;font-size:14.50px;letter-spacing:-0.186px;color:#8a4b8b;font-weight:normal">Self Selection</div><div class="t" style="left:50.00px;top:812.34px;font-size:12.00px;letter-spacing:-0.724px;color:#444;font-weight:normal;transform:scaleX(0.9871)">Roles</div><div class="t" style="left:212.72px;top:813.94px;font-size:12.00px;letter-spacing:-0.268px;color:#444;font-weight:normal">Student</div><div class="t" style="left:278.07px;top:813.94px;font-size:12.00px;letter-spacing:-0.278px;color:#444;font-weight:normal">Supervisor</div><div class="t" style="left:359.21px;top:813.94px;font-size:12.00px;letter-spacing:-0.143px;color:#444;font-weight:normal">Coordinator</div><div class="t" style="left:446.57px;top:813.94px;font-size:12.00px;letter-spacing:0.049px;color:#444;font-weight:normal">Director</div><div class="t" style="left:514.20px;top:813.94px;font-size:12.00px;letter-spacing:-0.220px;color:#444;font-weight:normal">Site contact</div><div class="t" style="left:601.06px;top:813.94px;font-size:12.00px;letter-spacing:0.103px;color:#444;font-weight:normal">Mentor</div><div class="t" style="left:50.25px;top:839.94px;font-size:12.00px;letter-spacing:-0.247px;color:#444;font-weight:normal">Maximum times selectable</div><div class="t" style="left:196.84px;top:839.74px;font-size:12.00px;letter-spacing:-0.111px;color:#a8a8a8;font-weight:normal">No Value</div><div class="a" style="left:0px;top:0px;width:979px;height:2px;background:#00b050"></div><div class="a" style="left:0px;top:860px;width:979px;height:2px;background:#00b050"></div><div class="a" style="left:0px;top:0px;width:2px;height:862px;background:#00b050"></div><div class="a" style="left:977px;top:0px;width:2px;height:862px;background:#00b050"></div><div class="badge" style="left:-1.0px;top:76.0px;width:40px;height:40px"><svg width="40" height="40" viewBox="0 0 40 40"><defs><radialGradient id="bg1" cx="45%" cy="38%" r="60%"><stop offset="0" stop-color="#e94545"/><stop offset="0.6" stop-color="#e03636"/><stop offset="1" stop-color="#da3030"/></radialGradient></defs><circle cx="20" cy="20" r="16.3" fill="url(#bg1)" stroke="#ff1010" stroke-width="1.7"/></svg><span>1</span></div><div class="badge" style="left:228.0px;top:201.8px;width:40px;height:40px"><svg width="40" height="40" viewBox="0 0 40 40"><defs><radialGradient id="bg2" cx="45%" cy="38%" r="60%"><stop offset="0" stop-color="#e94545"/><stop offset="0.6" stop-color="#e03636"/><stop offset="1" stop-color="#da3030"/></radialGradient></defs><circle cx="20" cy="20" r="16.3" fill="url(#bg2)" stroke="#ff1010" stroke-width="1.7"/></svg><span>2</span></div><div class="badge" style="left:155.6px;top:653.4px;width:40px;height:40px"><svg width="40" height="40" viewBox="0 0 40 40"><defs><radialGradient id="bg3" cx="45%" cy="38%" r="60%"><stop offset="0" stop-color="#e94545"/><stop offset="0.6" stop-color="#e03636"/><stop offset="1" stop-color="#da3030"/></radialGradient></defs><circle cx="20" cy="20" r="16.3" fill="url(#bg3)" stroke="#ff1010" stroke-width="1.7"/></svg><span>3</span></div><div class="badge" style="left:531.3px;top:744.0px;width:40px;height:40px"><svg width="40" height="40" viewBox="0 0 40 40"><defs><radialGradient id="bg4" cx="45%" cy="38%" r="60%"><stop offset="0" stop-color="#e94545"/><stop offset="0.6" stop-color="#e03636"/><stop offset="1" stop-color="#da3030"/></radialGradient></defs><circle cx="20" cy="20" r="16.3" fill="url(#bg4)" stroke="#ff1010" stroke-width="1.7"/></svg><span>4</span></div><div class="badge" style="left:118.8px;top:795.8px;width:40px;height:40px"><svg width="40" height="40" viewBox="0 0 40 40"><defs><radialGradient id="bg5" cx="45%" cy="38%" r="60%"><stop offset="0" stop-color="#e94545"/><stop offset="0.6" stop-color="#e03636"/><stop offset="1" stop-color="#da3030"/></radialGradient></defs><circle cx="20" cy="20" r="16.3" fill="url(#bg5)" stroke="#ff1010" stroke-width="1.7"/></svg><span>5</span></div><div class="badge" style="left:779.0px;top:262.7px;width:40px;height:40px"><svg width="40" height="40" viewBox="0 0 40 40"><defs><radialGradient id="bg6" cx="45%" cy="38%" r="60%"><stop offset="0" stop-color="#e94545"/><stop offset="0.6" stop-color="#e03636"/><stop offset="1" stop-color="#da3030"/></radialGradient></defs><circle cx="20" cy="20" r="16.3" fill="url(#bg6)" stroke="#ff1010" stroke-width="1.7"/></svg><span>6</span></div><div class="badge" style="left:627.0px;top:342.3px;width:40px;height:40px"><svg width="40" height="40" viewBox="0 0 40 40"><defs><radialGradient id="bg7" cx="45%" cy="38%" r="60%"><stop offset="0" stop-color="#e94545"/><stop offset="0.6" stop-color="#e03636"/><stop offset="1" stop-color="#da3030"/></radialGradient></defs><circle cx="20" cy="20" r="16.3" fill="url(#bg7)" stroke="#ff1010" stroke-width="1.7"/></svg><span>7</span></div><div class="badge" style="left:602.9px;top:438.5px;width:40px;height:40px"><svg width="40" height="40" viewBox="0 0 40 40"><defs><radialGradient id="bg8" cx="45%" cy="38%" r="60%"><stop offset="0" stop-color="#e94545"/><stop offset="0.6" stop-color="#e03636"/><stop offset="1" stop-color="#da3030"/></radialGradient></defs><circle cx="20" cy="20" r="16.3" fill="url(#bg8)" stroke="#ff1010" stroke-width="1.7"/></svg><span>8</span></div><div class="badge" style="left:778.9px;top:544.3px;width:40px;height:40px"><svg width="40" height="40" viewBox="0 0 40 40"><defs><radialGradient id="bg9" cx="45%" cy="38%" r="60%"><stop offset="0" stop-color="#e94545"/><stop offset="0.6" stop-color="#e03636"/><stop offset="1" stop-color="#da3030"/></radialGradient></defs><circle cx="20" cy="20" r="16.3" fill="url(#bg9)" stroke="#ff1010" stroke-width="1.7"/></svg><span>9</span></div></div></body></html>
